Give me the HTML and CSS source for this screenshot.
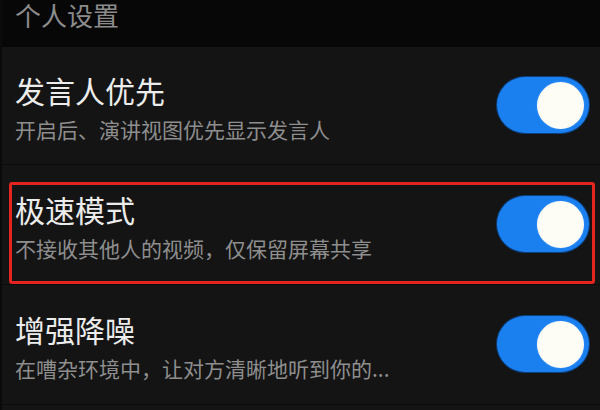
FILE: index.html
```html
<!DOCTYPE html>
<html lang="zh-CN">
<head>
    <meta charset="UTF-8">
    <meta name="viewport" content="width=device-width, initial-scale=1.0">
    <title>个人设置</title>
    <link rel="stylesheet" href="styles.css">
</head>
<body>
    <div class="screen">
        <div class="section-title">个人设置</div>

        <div class="setting-list">
            <div class="setting-row">
                <div class="setting-text">
                    <div class="setting-name">发言人优先</div>
                    <div class="setting-desc">开启后、演讲视图优先显示发言人</div>
                </div>
                <div class="switch on"><span class="knob"></span></div>
            </div>

            <!-- 红框标注 -->
            <div class="setting-row highlight">
                <div class="setting-text">
                    <div class="setting-name">极速模式</div>
                    <div class="setting-desc">不接收其他人的视频，仅保留屏幕共享</div>
                </div>
                <div class="switch on"><span class="knob"></span></div>
            </div>

            <div class="setting-row">
                <div class="setting-text">
                    <div class="setting-name">增强降噪</div>
                    <div class="setting-desc">在嘈杂环境中，让对方清晰地听到你的...</div>
                </div>
                <div class="switch on"><span class="knob"></span></div>
            </div>
        </div>
    </div>
</body>
</html>
```

FILE: styles.css
```css
body {
    margin: 0;
    background: #141414;
    font-family: "Noto Sans CJK SC", "Noto Sans", sans-serif;
    overflow: hidden;
}

.screen {
    width: 600px;
    height: 410px;
    background: #141414;
    border-left: 2px solid #0a0a0a;
    box-sizing: border-box;
}

.section-title {
    height: 47px;
    background: #070707;
    padding-left: 13px;
    font-size: 26px;
    line-height: 30px;
    color: #8c8c8c;
}

.setting-row {
    height: 120px;
    display: flex;
    justify-content: space-between;
    align-items: flex-start;
    padding: 26px 11px 0 13px;
    box-sizing: border-box;
    position: relative;
    border-bottom: 1px solid #0c0c0c;
}

.setting-row:first-child {
    height: 118px;
    padding-top: 25px;
}

.setting-name {
    font-size: 30px;
    line-height: 36px;
    color: #ececec;
}

.setting-desc {
    margin-top: 7px;
    font-size: 21px;
    line-height: 28px;
    color: #8e8e8e;
}

.switch {
    width: 92px;
    height: 56px;
    margin-top: 5px;
    border-radius: 28px;
    background: #1a80f0;
    box-shadow: 0 0 0 1px #0d3f7c;
    display: flex;
    justify-content: flex-end;
    align-items: center;
    padding: 0 5px;
    box-sizing: border-box;
}

.knob {
    width: 47px;
    height: 47px;
    border-radius: 50%;
    background: #fdfdf6;
    box-shadow: 0 0 2px rgba(120, 170, 255, 0.6);
}

.highlight::after {
    content: "";
    position: absolute;
    top: 17px;
    left: 7px;
    right: 5px;
    bottom: 0;
    border: 3px solid #e3241f;
    border-radius: 3px;
    pointer-events: none;
}
```
